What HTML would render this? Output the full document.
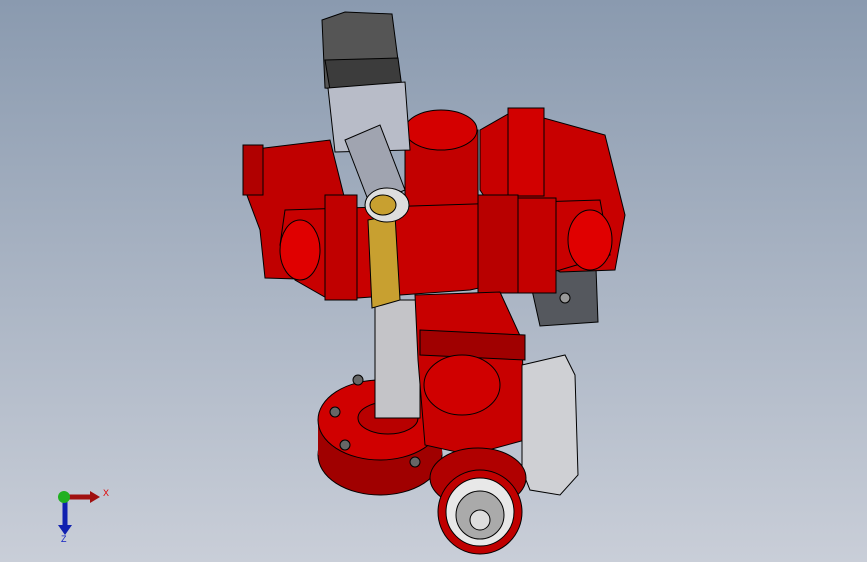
<!DOCTYPE html>
<html><head><style>
html,body{margin:0;padding:0;width:867px;height:562px;overflow:hidden}
body{background:linear-gradient(#8a9aaf,#c9ced8)}
svg{position:absolute;left:0;top:0}
</style></head><body>
<svg width="867" height="562" viewBox="0 0 867 562" stroke="#000" stroke-width="1">
<!-- dark bracket right -->
<path d="M528 272 L596 268 L598 322 L540 326 Z" fill="#55585e"/>
<circle cx="565" cy="298" r="5" fill="#999"/>
<!-- base flange -->
<ellipse cx="380" cy="455" rx="62" ry="40" fill="#a00000"/>
<rect x="318" y="420" width="124" height="35" fill="#a00000" stroke="none"/>
<ellipse cx="380" cy="420" rx="62" ry="40" fill="#d00000"/>
<ellipse cx="388" cy="418" rx="30" ry="16" fill="#b80000"/>
<circle cx="335" cy="412" r="5" fill="#666"/><circle cx="345" cy="445" r="5" fill="#666"/><circle cx="415" cy="462" r="5" fill="#666"/><circle cx="358" cy="380" r="5" fill="#666"/>
<!-- pillar -->
<rect x="375" y="300" width="45" height="118" fill="#c4c4c8"/>
<!-- left elbow -->
<path d="M248 150 L330 140 L345 200 L330 280 L265 278 L260 230 L245 190 Z" fill="#c00000"/>
<rect x="243" y="145" width="20" height="50" fill="#b00000"/>
<!-- right elbow -->
<path d="M480 130 L515 110 L605 135 L625 215 L615 270 L560 272 L520 250 L480 190 Z" fill="#c80000"/>
<rect x="508" y="108" width="36" height="88" fill="#d20000"/>
<!-- central cylinder -->
<rect x="405" y="130" width="73" height="80" fill="#c20000"/>
<ellipse cx="441" cy="130" rx="36" ry="20" fill="#d40000"/>
<!-- horizontal pipe -->
<path d="M285 210 L600 200 L610 255 L560 270 L470 290 L330 300 L295 280 L280 245 Z" fill="#c80000"/>
<rect x="325" y="195" width="32" height="105" fill="#c00000"/>
<rect x="478" y="195" width="40" height="98" fill="#b80000"/>
<rect x="518" y="198" width="38" height="95" fill="#c40000"/>
<ellipse cx="300" cy="250" rx="20" ry="30" fill="#e00000"/>
<ellipse cx="590" cy="240" rx="22" ry="30" fill="#e00000"/>
<!-- gold gear -->
<path d="M368 220 L395 215 L400 300 L372 308 Z" fill="#c8a030"/>
<!-- grey motor -->
<path d="M322 20 L345 12 L392 14 L398 60 L350 90 L325 88 Z" fill="#555"/>
<path d="M325 60 L398 58 L402 88 L330 90 Z" fill="#3c3c3c"/>
<path d="M328 88 L405 82 L410 150 L335 152 Z" fill="#b8bcc8"/>
<path d="M345 140 L380 125 L405 190 L370 205 Z" fill="#a0a4b0"/>
<ellipse cx="387" cy="205" rx="22" ry="17" fill="#ddd"/>
<ellipse cx="383" cy="205" rx="13" ry="10" fill="#c8a030"/>
<!-- lower red body -->
<path d="M415 295 L500 292 L522 340 L525 440 L470 455 L425 445 L418 360 Z" fill="#c80000"/>
<path d="M420 330 L525 335 L525 360 L420 355 Z" fill="#a00000"/>
<ellipse cx="462" cy="385" rx="38" ry="30" fill="#d00000"/>
<!-- right grey cylinder -->
<path d="M522 365 L565 355 L575 375 L578 475 L560 495 L530 490 L522 470 Z" fill="#cfd0d4"/>
<!-- nozzle -->
<ellipse cx="478" cy="478" rx="48" ry="30" fill="#b00000"/>
<circle cx="480" cy="512" r="42" fill="#c00000"/>
<circle cx="480" cy="512" r="34" fill="#e8e8e8"/>
<circle cx="480" cy="515" r="24" fill="#aaa"/>
<circle cx="480" cy="520" r="10" fill="#ddd"/>
<!-- axis icon -->
<path d="M65 528 L65 498" stroke="#1020b0" stroke-width="5" fill="none"/>
<path d="M58 525 L65 535 L72 525 Z" fill="#1020b0" stroke="none"/>
<path d="M65 497 L92 497" stroke="#a01010" stroke-width="5" fill="none"/>
<path d="M90 491 L100 497 L90 503 Z" fill="#a01010" stroke="none"/>
<circle cx="64" cy="497" r="6" fill="#20b020" stroke="none"/>
<text x="103" y="496" font-family="Liberation Sans, sans-serif" font-size="9" fill="#e00000" stroke="none">X</text>
<text x="61" y="542" font-family="Liberation Sans, sans-serif" font-size="9" fill="#1020c0" stroke="none">Z</text>
</svg>
</body></html>
